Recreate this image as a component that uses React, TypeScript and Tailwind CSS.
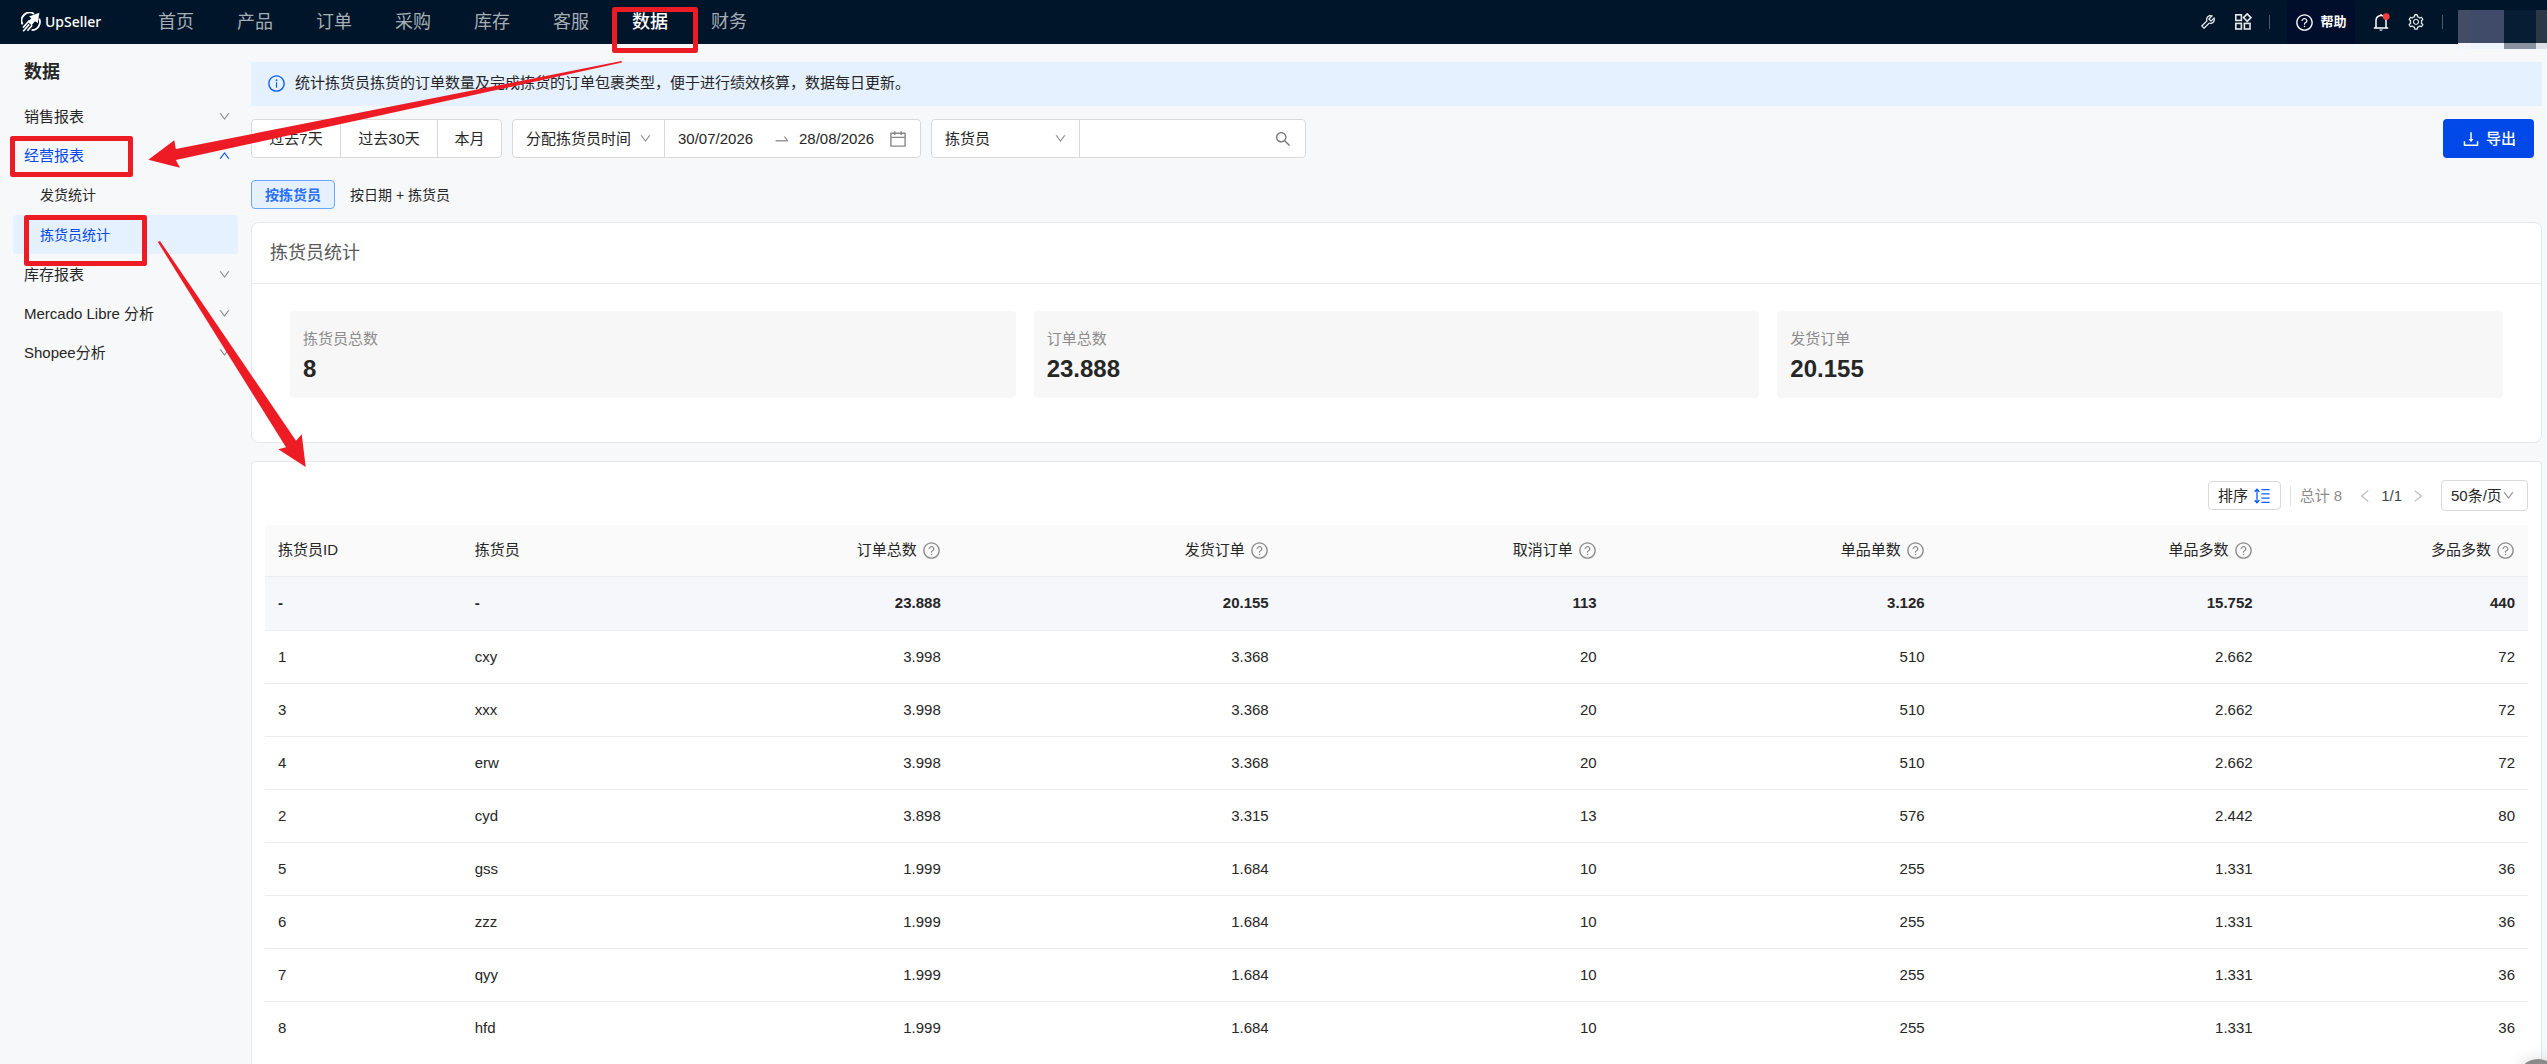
import * as React from "react";
import {
  AiOutlineCalendar,
  AiOutlineDown,
  AiOutlineDownload,
  AiOutlineInfoCircle,
  AiOutlineLeft,
  AiOutlineQuestionCircle,
  AiOutlineRight,
  AiOutlineSearch,
  AiOutlineSetting,
  AiOutlineSwapRight,
  AiOutlineTool,
  AiOutlineUp,
} from "react-icons/ai";

const navItems = ["首页", "产品", "订单", "采购", "库存", "客服", "数据", "财务"];

const stats = [
  { label: "拣货员总数", value: "8" },
  { label: "订单总数", value: "23.888" },
  { label: "发货订单", value: "20.155" },
];

const metricColumns = ["订单总数", "发货订单", "取消订单", "单品单数", "单品多数", "多品多数"];

const totals = ["23.888", "20.155", "113", "3.126", "15.752", "440"];

const rows = [
  { id: "1", name: "cxy", values: ["3.998", "3.368", "20", "510", "2.662", "72"] },
  { id: "3", name: "xxx", values: ["3.998", "3.368", "20", "510", "2.662", "72"] },
  { id: "4", name: "erw", values: ["3.998", "3.368", "20", "510", "2.662", "72"] },
  { id: "2", name: "cyd", values: ["3.898", "3.315", "13", "576", "2.442", "80"] },
  { id: "5", name: "gss", values: ["1.999", "1.684", "10", "255", "1.331", "36"] },
  { id: "6", name: "zzz", values: ["1.999", "1.684", "10", "255", "1.331", "36"] },
  { id: "7", name: "qyy", values: ["1.999", "1.684", "10", "255", "1.331", "36"] },
  { id: "8", name: "hfd", values: ["1.999", "1.684", "10", "255", "1.331", "36"] },
];

function LogoIcon() {
  return (
    <svg viewBox="0 0 20 20" className="size-5" fill="none" stroke="#fff" aria-hidden="true">
      <path d="M13 1.9A8 8 0 0 0 1.6 12.4" strokeWidth="1.8" />
      <path d="M18.2 6.6A8.2 8.2 0 0 1 10.6 18.2" strokeWidth="1.8" />
      <path d="M18.4.8 16.8 11 14 9.2 10.6 13.2 7 10.2 10.3 6.2 8 4.6Z" fill="#fff" stroke="none" />
      <path d="M8.6 8.2 2 15.6M8.2 12.4 2.2 19.2M11.2 13.2 6.4 18.8" strokeWidth="1.6" />
    </svg>
  );
}

function AppsIcon() {
  return (
    <svg viewBox="0 0 18 18" className="size-[18px]" fill="none" stroke="currentColor" strokeWidth="1.6" aria-hidden="true">
      <rect x="1.8" y="1.8" width="5.6" height="5.6" />
      <rect x="1.8" y="10.4" width="5.6" height="5.6" />
      <rect x="10.4" y="10.4" width="5.6" height="5.6" />
      <path d="m13.2.9 3.7 3.7-3.7 3.7-3.7-3.7Z" />
    </svg>
  );
}

function BellIcon() {
  return (
    <svg viewBox="0 0 18 18" className="size-[18px]" fill="none" aria-hidden="true">
      <path d="M4 14.8V7.4a5 5 0 0 1 10 0v7.4M1.8 14.9h14.4M9 2.4V.9" stroke="#fff" strokeWidth="1.5" />
      <path d="M7.3 16.4h3.4a1.7 1.3 0 0 1-3.4 0Z" fill="#fff" />
      <circle cx="14.2" cy="3.6" r="3.4" fill="#ff3b3b" />
    </svg>
  );
}

function SortIcon() {
  return (
    <svg viewBox="0 0 16 16" className="size-4" fill="none" stroke="#0f5bff" strokeWidth="1.3" aria-hidden="true">
      <path d="M3 1.4v13.2M.6 3.8 3 1.3l2.4 2.5M.6 12.2 3 14.7l2.4-2.5" />
      <path d="M7.4 1.6h8.2M7.4 5.9h8.2M7.4 10.1h8.2M7.4 14.4h8.2" />
    </svg>
  );
}

function Header() {
  return (
    <header className="relative z-10 flex h-11 items-center bg-[#001529] pl-[21px]">
      <a href="#" className="mr-[58px] flex items-center gap-1 text-white">
        <LogoIcon />
        <span className="w-[55px] font-['Noto_Sans',sans-serif] text-sm font-medium">UpSeller</span>
      </a>
      <nav className="flex gap-[43px] text-lg leading-6 text-[#a6adb4]">
        {navItems.map((item) => (
          <a key={item} href="#" className={item === "数据" ? "font-medium text-white" : ""}>
            {item}
          </a>
        ))}
      </nav>
      <div className="ml-auto flex h-full items-center gap-[17px] text-lg text-[#e6e8ea]">
        <button aria-label="工具"><AiOutlineTool /></button>
        <button aria-label="应用"><AppsIcon /></button>
        <span className="h-3.5 w-px bg-[#4d5b69]" />
        <button className="flex h-full w-[68px] items-center justify-center gap-1.5 rounded bg-[#000e2b] text-[13px] font-bold text-white">
          <AiOutlineQuestionCircle className="text-[19px]" />
          帮助
        </button>
        <button aria-label="通知"><BellIcon /></button>
        <button aria-label="设置"><AiOutlineSetting /></button>
        <span className="h-3.5 w-px bg-[#4d5b69]" />
      </div>
      {/* Masked account block, hangs a little below the bar */}
      <div className="mt-[10px] ml-[15px] grid h-[39px] grid-cols-[13px_33px_32px_11px] grid-rows-[33px_6px] self-start">
        <span className="bg-[#434d66]" />
        <span className="bg-[#3f4b69]" />
        <span className="bg-[#071d33]" />
        <span className="bg-[#2b3947]" />
        <span className="bg-[#f3f6fb]" />
        <span className="bg-[#ecf3ff]" />
        <span className="bg-[#8a929f]" />
        <span className="bg-[#dfe0e5]" />
      </div>
    </header>
  );
}

function MenuGroup({ label, open = false, children }: { label: string; open?: boolean; children?: React.ReactNode }) {
  return (
    <li>
      <button className={`flex h-[39px] w-full items-center justify-between pr-[7px] pl-[11px] ${open ? "text-[#0049e8]" : ""}`}>
        {label}
        {open ? <AiOutlineUp className="text-[13px]" /> : <AiOutlineDown className="text-[13px] text-[#888]" />}
      </button>
      {children}
    </li>
  );
}

function Sidebar() {
  return (
    <aside className="w-[251px] shrink-0 px-[13px] pt-[15px]">
      <h1 className="mb-[11px] pl-[11px] text-lg leading-[27px] font-bold">数据</h1>
      <ul>
        <MenuGroup label="销售报表" />
        <MenuGroup label="经营报表" open>
          <ul className="flex flex-col gap-px pb-px text-sm">
            <li>
              <a href="#" className="flex h-[39px] items-center pl-[27px]">发货统计</a>
            </li>
            <li>
              <a href="#" className="flex h-[39px] items-center rounded bg-[#e5f1ff] pl-[27px] text-[#0049e8]">拣货员统计</a>
            </li>
          </ul>
        </MenuGroup>
        <MenuGroup label="库存报表" />
        <MenuGroup label="Mercado Libre 分析" />
        <MenuGroup label="Shopee分析" />
      </ul>
    </aside>
  );
}

function Filters() {
  return (
    <div className="mt-[13px] flex h-[39px] items-stretch pr-2">
      <div className="flex divide-x divide-[#d9d9d9] rounded border border-[#d9d9d9] bg-white">
        <button className="w-[89px]">过去7天</button>
        <button className="w-[97px]">过去30天</button>
        <button className="w-[63px]">本月</button>
      </div>

      <div className="ml-2.5 flex w-[409px] rounded border border-[#d9d9d9] bg-white">
        <div className="relative flex w-[152px] items-center border-r border-[#d9d9d9]">
          <select aria-label="时间类型" className="h-full w-full appearance-none pl-[13px]">
            <option>分配拣货员时间</option>
          </select>
          <AiOutlineDown className="pointer-events-none absolute right-3 text-[13px] text-[#888]" />
        </div>
        <div className="flex flex-1 items-center pr-3 pl-[13px]">
          <input aria-label="开始日期" defaultValue="30/07/2026" className="w-20 outline-none" />
          <AiOutlineSwapRight className="mr-2 ml-[15px] text-lg text-[#999]" />
          <input aria-label="结束日期" defaultValue="28/08/2026" className="w-20 outline-none" />
          <AiOutlineCalendar className="ml-auto text-xl text-[#888]" />
        </div>
      </div>

      <div className="ml-2.5 flex w-[375px] rounded border border-[#d9d9d9] bg-white">
        <div className="relative flex w-[148px] items-center border-r border-[#d9d9d9]">
          <select aria-label="搜索类型" className="h-full w-full appearance-none pl-[13px]">
            <option>拣货员</option>
          </select>
          <AiOutlineDown className="pointer-events-none absolute right-3 text-[13px] text-[#888]" />
        </div>
        <input aria-label="搜索" className="min-w-0 flex-1 px-3 outline-none" />
        <button aria-label="搜索" className="pr-[13px] text-lg text-[#777]"><AiOutlineSearch /></button>
      </div>

      <button className="ml-auto flex w-[91px] items-center justify-center gap-[5px] rounded bg-[#0049e8] font-medium text-white">
        <AiOutlineDownload className="text-xl" />
        导出
      </button>
    </div>
  );
}

function Summary() {
  return (
    <section className="mt-[13px] rounded-lg border border-[#e6e8eb] bg-white">
      <h2 className="flex h-[61px] items-center border-b border-[#ebedf0] pl-[18px] text-lg text-[#595959]">拣货员统计</h2>
      <div className="grid grid-cols-3 gap-[18px] px-[38px] pt-[27px] pb-11">
        {stats.map((stat) => (
          <div key={stat.label} className="rounded bg-[#f7f7f7] px-[13px] py-4">
            <p className="leading-[23px] text-[#8c8c8c]">{stat.label}</p>
            <p className="mt-[5px] text-2xl leading-[27px] font-bold">{stat.value}</p>
          </div>
        ))}
      </div>
    </section>
  );
}

function TableToolbar() {
  return (
    <div className="flex h-[31px] items-center justify-end">
      <button className="flex h-[29px] w-[73px] items-center justify-center gap-1.5 rounded border border-[#d9d9d9]">
        排序
        <SortIcon />
      </button>
      <span className="mx-[9px] h-5 w-px bg-[#e0e0e0]" />
      <span className="text-[#8c8c8c]">总计 8</span>
      <div className="mx-[15px] flex items-center gap-2">
        <button aria-label="上一页" className="text-[#bfbfbf]"><AiOutlineLeft className="text-base" /></button>
        <span className="text-[#444]">1/1</span>
        <button aria-label="下一页" className="text-[#bfbfbf]"><AiOutlineRight className="text-base" /></button>
      </div>
      <div className="relative flex h-full w-[87px] items-center rounded border border-[#d9d9d9]">
        <select aria-label="每页条数" className="h-full w-full appearance-none pl-[9px]">
          <option>50条/页</option>
        </select>
        <AiOutlineDown className="pointer-events-none absolute right-3 text-[13px] text-[#888]" />
      </div>
    </div>
  );
}

function PickerTable() {
  return (
    <table className="mt-3.5 w-full table-fixed">
      <colgroup>
        <col className="w-[120px]" />
        <col className="w-[100px]" />
        <col className="w-[200px]" />
        <col className="w-[200px]" />
        <col className="w-[200px]" />
        <col className="w-[200px]" />
        <col className="w-[200px]" />
        <col className="w-[160px]" />
      </colgroup>
      <thead>
        <tr className="h-[51px] border-b border-[#ebedf0] bg-[#fafafa]">
          <th className="px-[13px] text-left font-normal">拣货员ID</th>
          <th className="px-[13px] text-left font-normal whitespace-nowrap">拣货员</th>
          {metricColumns.map((column) => (
            <th key={column} className="px-[13px] font-normal">
              <span className="flex items-center justify-end gap-[5px]">
                {column}
                <AiOutlineQuestionCircle className="text-[19px] text-[#8c8c8c]" />
              </span>
            </th>
          ))}
        </tr>
      </thead>
      <tbody>
        <tr className="h-[54px] border-b border-[#ebedf0] bg-[#f5f7fb] font-bold">
          <td className="px-[13px]">-</td>
          <td className="px-[13px]">-</td>
          {totals.map((value, index) => (
            <td key={index} className="px-[13px] text-right">{value}</td>
          ))}
        </tr>
        {rows.map((row) => (
          <tr key={row.id} className="h-[53px] border-b border-[#ebedf0] last:border-b-0">
            <td className="px-[13px]">{row.id}</td>
            <td className="px-[13px]">{row.name}</td>
            {row.values.map((value, index) => (
              <td key={index} className="px-[13px] text-right">{value}</td>
            ))}
          </tr>
        ))}
      </tbody>
    </table>
  );
}

/** Red boxes and arrows that walk through the menu path */
function GuideMarks() {
  return (
    <svg className="pointer-events-none absolute top-0 left-0 z-20 h-[480px] w-[720px]" viewBox="0 0 720 480" aria-hidden="true">
      <g fill="none" stroke="#ed1c24" strokeWidth="5" strokeLinejoin="round">
        <rect x="614.5" y="9.5" width="81" height="41" />
        <rect x="12.5" y="138.5" width="118" height="36" />
        <rect x="26.5" y="217.5" width="118" height="46" />
      </g>
      <g fill="#ed1c24">
        <path d="M148.3 159.7 174.3 140.3 175.8 149 621.5 61 622 62.6 175.8 160 180 167.7Z" />
        <path d="M305.7 467 278.3 449.3 286 447.3 157.8 242 160 241 296 440.7 301.7 434.3Z" />
      </g>
    </svg>
  );
}

export default function App() {
  return (
    <div className="relative flex min-h-screen flex-col overflow-hidden bg-[#f7f8fa] font-['Liberation_Sans','Noto_Sans_CJK_SC',sans-serif] text-[15px] leading-[22px] text-[#262626]">
      <Header />
      <div className="flex flex-1">
        <Sidebar />
        <main className="flex min-w-0 flex-1 flex-col pt-[18px] pr-[5px]">
          <div className="flex h-11 items-center gap-[9px] bg-[#e5f1ff] pb-0.5 pl-4">
            <AiOutlineInfoCircle className="text-[19px] text-[#0f5bff]" />
            统计拣货员拣货的订单数量及完成拣货的订单包裹类型，便于进行绩效核算，数据每日更新。
          </div>
          <Filters />
          <div className="mt-[22px] flex h-[29px] text-sm">
            <button className="rounded border border-[#69a5ff] bg-[#e5f1ff] px-[13px] font-bold text-[#2970ff]">按拣货员</button>
            <button className="px-[15px]">按日期 + 拣货员</button>
          </div>
          <Summary />
          <section className="mt-[18px] flex-1 rounded-t border border-b-0 border-[#e6e8eb] bg-white px-[13px] pt-[18px]">
            <TableToolbar />
            <PickerTable />
          </section>
        </main>
      </div>
      <button aria-label="客服" className="fixed -right-[11px] -bottom-[35px] size-10 rounded-full bg-[#8a8a8a] shadow-[0_0_16px_rgba(0,0,0,0.15)]" />
      <GuideMarks />
    </div>
  );
}
